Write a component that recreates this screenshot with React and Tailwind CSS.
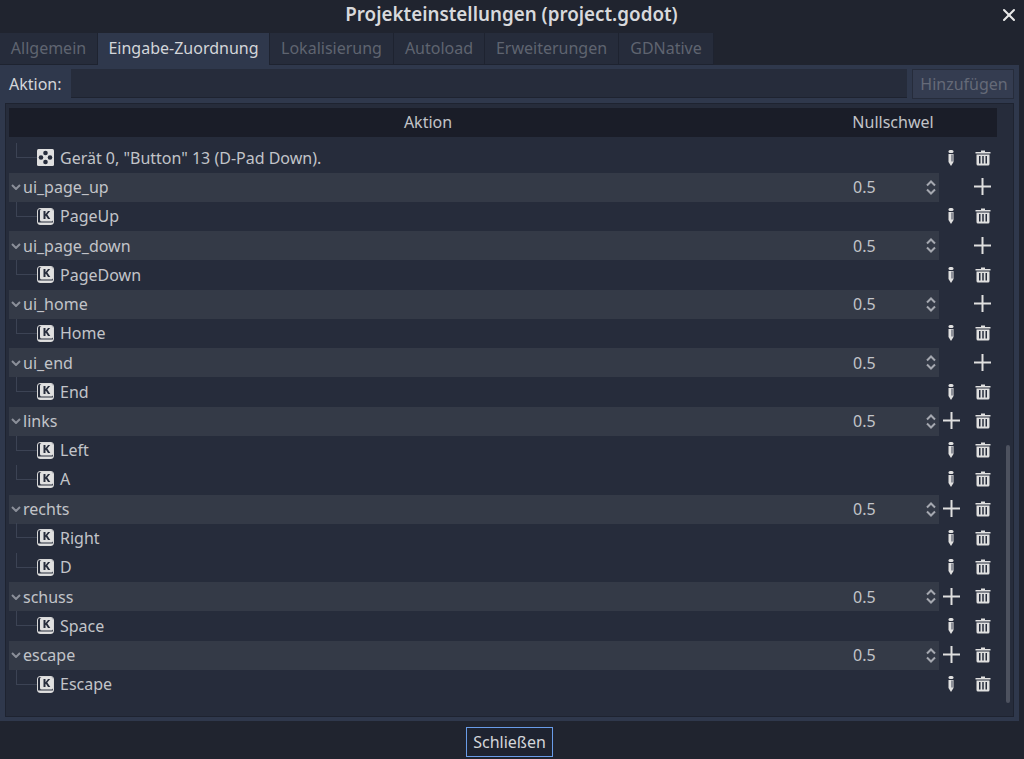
import { X } from 'lucide-react';

const tabs = [
  { name: 'Allgemein', width: 'w-[98px]' },
  { name: 'Eingabe-Zuordnung', width: 'w-[172px]', active: true },
  { name: 'Lokalisierung', width: 'w-[124px]' },
  { name: 'Autoload', width: 'w-[91px]' },
  { name: 'Erweiterungen', width: 'w-[134px]' },
  { name: 'GDNative', width: 'w-[95px]' },
];

const actions = [
  { name: 'ui_page_up', builtin: true, events: ['PageUp'] },
  { name: 'ui_page_down', builtin: true, events: ['PageDown'] },
  { name: 'ui_home', builtin: true, events: ['Home'] },
  { name: 'ui_end', builtin: true, events: ['End'] },
  { name: 'links', events: ['Left', 'A'] },
  { name: 'rechts', events: ['Right', 'D'] },
  { name: 'schuss', events: ['Space'] },
  { name: 'escape', events: ['Escape'] },
];

const TrashIcon = () => (
  <svg width="16" height="16" viewBox="0 0 16 16" fill="#e0e0e0">
    <path d="M6 0.5h4v1.5h5.5v1.5h-15v-1.5h5.5z" />
    <path fillRule="evenodd" d="M1.5 4.5h13v9.5a1.5 1.5 0 0 1-1.5 1.5h-10a1.5 1.5 0 0 1-1.5-1.5zM4 6v7.5h1.5v-7.5zM7.25 6v7.5h1.5v-7.5zM10.5 6v7.5h1.5v-7.5z" />
  </svg>
);

const PencilIcon = () => (
  <svg width="6" height="16" viewBox="0 0 6 16" fill="#e0e0e0">
    <rect x="0.5" y="0" width="5" height="3" rx="1.5" />
    <path d="M0.5 4h5v8l-2.5 4l-2.5-4z" />
    <rect x="3" y="4.5" width="2" height="7" fill="#8d9099" />
  </svg>
);

const PlusIcon = () => (
  <svg width="17" height="17" viewBox="0 0 17 17" fill="#e0e0e0">
    <rect x="7.5" y="0" width="2" height="17" />
    <rect x="0" y="7.5" width="17" height="2" />
  </svg>
);

const KeyIcon = () => (
  <svg width="17" height="17" viewBox="0 0 17 17">
    <rect x="0.5" y="0.5" width="16" height="16" rx="2.5" fill="none" stroke="#d8d8d8" />
    <rect x="3" y="1" width="13" height="12.5" rx="1.5" fill="#e0e0e0" />
    <path d="M1 14.5h15v1.5h-15z" fill="#e0e0e0" />
    <path d="M6.5 3h2v3.2L11 3h2.2l-2.9 3.5l3 4.5H11L8.9 7.8l-.4.5V11h-2z" fill="#262c3b" />
  </svg>
);

const JoypadIcon = () => (
  <svg width="17" height="17" viewBox="0 0 17 17">
    <rect width="17" height="17" rx="1.5" fill="#e0e0e0" />
    <circle cx="8.5" cy="4" r="2.3" fill="#262c3b" />
    <circle cx="4" cy="8.5" r="2.3" fill="#262c3b" />
    <circle cx="13" cy="8.5" r="2.3" fill="#262c3b" />
    <circle cx="8.5" cy="13" r="2.3" fill="#262c3b" />
  </svg>
);

const SpinArrows = () => (
  <svg width="10" height="15" viewBox="0 0 10 15" fill="none" stroke="#a5a8b0" strokeWidth="2">
    <path d="M1 5.5l4-4l4 4" />
    <path d="M1 9.5l4 4l4-4" />
  </svg>
);

const Chevron = () => (
  <svg width="10" height="6" viewBox="0 0 10 6" fill="none" stroke="#8b8f99" strokeWidth="2">
    <path d="M1 1l4 4l4-4" />
  </svg>
);

const EventRow = ({ icon, label }) => (
  <div className="flex h-[29.25px] w-[988px] shrink-0 items-start">
    <div className="ml-[7px] h-[15px] w-[21px] shrink-0 border-b border-l border-[#3c4354]" />
    <div className="mt-[6px] flex h-[17px] w-[17px] shrink-0 items-center justify-center">{icon}</div>
    <span className="ml-[6px] flex-1 self-center">{label}</span>
    <div className="flex w-[6px] shrink-0 justify-center self-center">
      <PencilIcon />
    </div>
    <div className="ml-[21px] mr-[6px] flex w-[16px] shrink-0 justify-center self-center">
      <TrashIcon />
    </div>
  </div>
);

const ActionRow = ({ name, builtin }) => (
  <div className="flex h-[29.25px] w-[988px] shrink-0 items-center">
    <div className="mt-[0.5px] flex h-[29px] w-[930px] shrink-0 items-center self-start bg-[#343a47]">
      <div className="ml-[2px] flex w-[10px] justify-center">
        <Chevron />
      </div>
      <span className="ml-[2px] flex-1">{name}</span>
      <span className="w-[73px]">0.5</span>
      <div className="mr-[3px] flex w-[10px] justify-center">
        <SpinArrows />
      </div>
    </div>
    {builtin ? (
      <div className="ml-[35px] flex w-[17px] justify-center">
        <PlusIcon />
      </div>
    ) : (
      <>
        <div className="ml-[4px] flex w-[17px] justify-center">
          <PlusIcon />
        </div>
        <div className="ml-[15px] flex w-[16px] justify-center">
          <TrashIcon />
        </div>
      </>
    )}
  </div>
);

const App = () => {
  return (
    <div className="flex h-[759px] w-[1024px] flex-col overflow-hidden bg-[#20242f] font-['Noto_Sans',sans-serif] text-[16px] text-[#c2c4c9]">
      <div className="flex h-[33px] shrink-0 items-center pb-[4px] pl-[24px] pr-[5px]">
        <div className="flex-1 text-center text-[18.8px] font-semibold text-[#d8d9dc]">Projekteinstellungen (project.godot)</div>
        <X size={20} color="#e8e8e8" strokeWidth={2.5} />
      </div>

      <div className="flex h-[32px] shrink-0">
        {tabs.map((tab) => (
          <div
            key={tab.name}
            className={
              tab.active
                ? `flex items-center justify-center border-r border-[#1e2330] bg-[#2f384c] pb-[2px] text-[#d4d6da] ${tab.width}`
                : `flex items-center justify-center border-r border-b border-[#1e2330] bg-[#262c3b] pb-[2px] text-[#5f6470] ${tab.width}`
            }
          >
            {tab.name}
          </div>
        ))}
      </div>

      <div className="flex h-[656px] w-[1019px] shrink-0 flex-col bg-[#2f384c] px-[5px] pb-[4px] pt-[4px]">
        <div className="flex h-[30px] shrink-0 items-center">
          <span className="ml-[4px] w-[62px] pb-[1px] text-[#d4d6da]">Aktion:</span>
          <div className="h-[29px] w-[837px] self-start border-b border-[#1e2330] bg-[#262c3b]" />
          <div className="ml-[5px] flex h-[30px] w-[102px] items-center justify-center border border-[#262c3b] bg-[#343c50] pl-[2px] text-[#656a78]">
            Hinzufügen
          </div>
        </div>

        <div className="mt-[4px] flex min-h-0 flex-1 flex-col overflow-hidden border border-[#1e2330] bg-[#262c3b] pb-[4px] pl-[3px] pt-[4px]">
          <div className="flex h-[29px] w-[988px] shrink-0 items-center bg-[#1a1d28] pb-[1px]">
            <div className="w-[838px] text-center">Aktion</div>
            <div className="w-[92px] text-center">Nullschwel</div>
          </div>
          <div className="flex min-h-0 flex-1">
            <div className="flex w-[988px] shrink-0 flex-col pt-[6px]">
              <EventRow icon={<JoypadIcon />} label={'Gerät 0, "Button" 13 (D-Pad Down).'} />
              {actions.map((action) => (
                <div key={action.name} className="flex flex-col">
                  <ActionRow name={action.name} builtin={action.builtin} />
                  {action.events.map((event) => (
                    <EventRow key={event} icon={<KeyIcon />} label={event} />
                  ))}
                </div>
              ))}
            </div>
            <div className="ml-[9px] mt-[308px] h-[258px] w-[4px] rounded-full bg-[#4d525f]" />
          </div>
        </div>
      </div>

      <div className="flex flex-1 items-center justify-center pr-[5px] pt-[3px]">
        <div className="flex h-[30px] w-[87px] items-center justify-center border border-[#699ce8] bg-[#1e2330] text-[#d4d6da]">
          Schließen
        </div>
      </div>
    </div>
  );
};

export default App;
